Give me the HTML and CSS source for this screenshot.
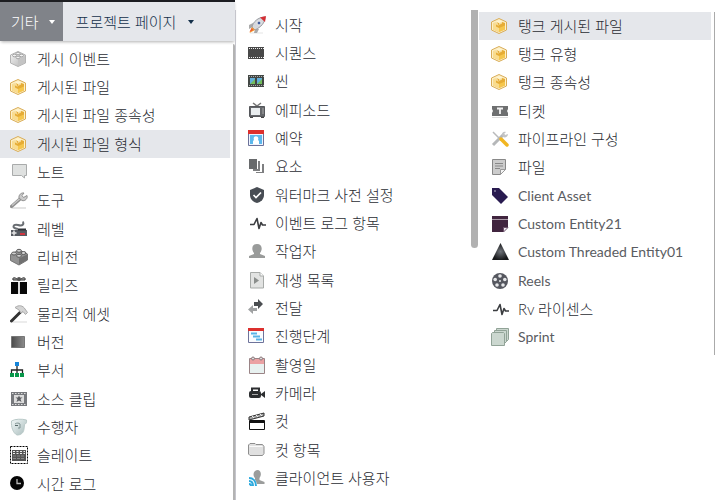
FILE: index.html
```html
<!DOCTYPE html>
<html lang="ko">
<head>
<meta charset="utf-8">
<meta name="viewport" content="width=device-width, initial-scale=1">
<title>기타</title>
<link rel="stylesheet" href="styles.css">
</head>
<body>
<svg class="defs" aria-hidden="true">
  <defs>
    <linearGradient id="gold" x1="0" y1="0" x2="0" y2="1"><stop offset="0" stop-color="#fbeab8"/><stop offset="1" stop-color="#eebf58"/></linearGradient>
    <linearGradient id="silver" x1="0" y1="0" x2="1" y2="1"><stop offset="0" stop-color="#f7f7f7"/><stop offset="1" stop-color="#b2b2b2"/></linearGradient>
    <linearGradient id="dark" x1="0" y1="0" x2="1" y2="0"><stop offset="0" stop-color="#4a4a4a"/><stop offset="1" stop-color="#8c8c8c"/></linearGradient>
    <linearGradient id="mask" x1="0" y1="0" x2="1" y2="1"><stop offset="0" stop-color="#f2f8f8"/><stop offset="1" stop-color="#a9bcbc"/></linearGradient>
    <radialGradient id="cone"><stop offset="0" stop-color="#70747a"/><stop offset="1" stop-color="#17181a"/></radialGradient>
  </defs>
  <symbol id="cube" viewBox="0 0 18 18">
    <path d="M8 1.500 15.500 5v8L8 16.500.5 13V5z" fill="#fdf0c8" stroke="#d9ac56"/>
    <path d="M2 6 8 3l6 3v6.500L8 15l-6-2.500z" fill="url(#gold)"/>
    <path d="M8 9l6-3v6.500L8 15z" fill="#f5c64c"/>
    <path d="M2 6l6 3v6l-6-2.500z" fill="#f9dc8e"/>
    <path d="M6 5 8 6v2l3-1.500V5l3 1v2.500L8 11 5 9.500V7.500L8 9z" fill="#e6ac35"/>
    <path d="M5 4.500 8 3l3.500 1.500L8 6z" fill="#fff4cf"/>
  </symbol>
  <symbol id="pulse" viewBox="0 0 18 18">
    <path d="M2 10.500h4L9 4.500l2 10 2-6 1.500 2.500H18" fill="none" stroke="#3b3d40" stroke-width="1.600" stroke-linejoin="round"/>
  </symbol>
</svg>

<main class="board">
  <section class="panel panel-first">
    <nav class="tabs">
      <button type="button" class="tab tab-active">기타 <span class="caret"></span></button>
      <button type="button" class="tab">프로젝트 페이지 <span class="caret"></span></button>
    </nav>
    <ul class="menu">
      <li><a href="#"><svg class="icon" viewBox="0 0 18 18"><path d="M8 1.500 15.500 5v8L8 16.500.5 13V5z" fill="url(#silver)" stroke="#b4b4b4"/><path d="M8 9.500 15 6v7l-7 3z" fill="#c4c4c4"/><g fill="#f2f2f2" stroke="#a4a4a4"><ellipse cx="8" cy="3.500" rx="2" ry="1.300"/><ellipse cx="4.500" cy="5.500" rx="2" ry="1.300"/><ellipse cx="11.500" cy="5.500" rx="2" ry="1.300"/><ellipse cx="8" cy="7.500" rx="2" ry="1.300"/></g></svg>게시 이벤트</a></li>
      <li><a href="#"><svg class="icon"><use href="#cube"/></svg>게시된 파일</a></li>
      <li><a href="#"><svg class="icon"><use href="#cube"/></svg>게시된 파일 종속성</a></li>
      <li><a href="#" class="current"><svg class="icon"><use href="#cube"/></svg>게시된 파일 형식</a></li>
      <li><a href="#"><svg class="icon" viewBox="0 0 18 18"><path d="M2.500 1.500h14v11h-2V15l-3-2.500h-9z" fill="#dfe1e0" stroke="#a9abab"/></svg>노트</a></li>
      <li><a href="#"><svg class="icon" viewBox="0 0 18 18"><path d="M2 17h14" stroke="#e4e4e4" stroke-width="2"/><path d="M1.500 15.500 10 8" stroke="#8f8f8f" stroke-width="3.200" stroke-linecap="round"/><path d="M2 14.500 10 7.500" stroke="#c8c8c8" stroke-width="1.200"/><path d="M9 7c-.5-3 2-5.500 5-5l-2 2.500 1.500 2 3.500-2c1 3-2 6-5 5z" fill="#cbcbcb" stroke="#919191"/></svg>도구</a></li>
      <li><a href="#"><svg class="icon" viewBox="0 0 18 18"><path d="M8 9c-7-1-5-5 0-4 5 1.500 6-1 5-3.500" fill="none" stroke="#6a6e73" stroke-width="2"/><path d="M1 10h16v6H1z" fill="#565a61"/><path d="M4 10.500v5M1.500 13h5" stroke="#e5e5e5" stroke-width="1.500"/><path d="M10 14h5" stroke="#d03540" stroke-width="2"/><path d="M8 9.500h8" stroke="#303338" stroke-width="2"/></svg>레벨</a></li>
      <li><a href="#"><svg class="icon" viewBox="0 0 18 18"><path d="M.5 6.500 9 2l8.500 4v6L9 17 .5 12.500z" fill="#929292" stroke="#747474"/><path d="M9 10.500 17 6.500v5.500l-8 4.500z" fill="#707070"/><g fill="#d0d0d0" stroke="#5c5c5c"><ellipse cx="9" cy="2.800" rx="2.400" ry="1.500"/><ellipse cx="4" cy="5.500" rx="2.400" ry="1.500"/><ellipse cx="13.500" cy="5" rx="2.400" ry="1.500"/><ellipse cx="9" cy="7.800" rx="2.400" ry="1.500"/></g></svg>리비전</a></li>
      <li><a href="#"><svg class="icon" viewBox="0 0 18 18"><path d="M1 6h7v12H1zm9 0h7v12h-7z" fill="#080808"/><path d="M8 6h2v12H8z" fill="#ddd"/><path d="M8.500 4C5 1 2 1 3 4zm1 0c3.500-3 6.500-3 5.500 0z" fill="#aaa" stroke="#333"/><circle cx="9" cy="3" r="2" fill="#555"/></svg>릴리즈</a></li>
      <li><a href="#"><svg class="icon" viewBox="0 0 18 18"><path d="M3 17h14" stroke="#ececec" stroke-width="2"/><path d="M1.500 16 11 6.500" stroke="#333" stroke-width="3" stroke-linecap="round"/><path d="M5 2.500C9-.5 13 .5 15 4l2.500 3.500-2 2L13 6.500l-2 1.500-2-3z" fill="#d4d4d4" stroke="#aaa"/></svg>물리적 에셋</a></li>
      <li><a href="#"><svg class="icon" viewBox="0 0 18 18"><path d="M1.500 3.500h13v11h-13z" fill="url(#dark)" stroke="#777"/></svg>버전</a></li>
      <li><a href="#"><svg class="icon" viewBox="0 0 18 18"><path d="M7 5v8M1.500 13V9h11v4" fill="none" stroke="#222" stroke-width="1.300"/><path d="M5 1h4v4H5z" fill="#1684d8"/><path d="M0 12h4v4H0zm5 0h4v4H5zm5 0h4v4h-4z" fill="#07974a"/></svg>부서</a></li>
      <li><a href="#"><svg class="icon" viewBox="0 0 18 18"><path d="M1 2h16v14H1z" fill="#77797d"/><path d="M2 3.500h14M2 14.500h14" stroke="#ddd" stroke-dasharray="1.500 1.500"/><path d="M4 5h10v8H4z" fill="#dcdcdc"/><path d="m9 5.500 1 2h2.500L10.500 9l1 3L9 10.500 6.500 12l1-3-2-1.500H8z" fill="#5a5c60"/></svg>소스 클립</a></li>
      <li><a href="#"><svg class="icon" viewBox="0 0 18 18"><path d="M1.500 3C5 .8 12 .8 16.500 2c.5 3-1 4-2 4.500L14 11c-.5 4-3 6-7 6C3 15 1 9 1.500 3z" fill="url(#mask)" stroke="#b9c9c8"/><path d="M5 6c2-1.500 4-1 5 0v4H8" fill="none" stroke="#809393"/><path d="M5 7.500h3" stroke="#566868"/></svg>수행자</a></li>
      <li><a href="#"><svg class="icon" viewBox="0 0 18 18"><path d="M.5.5h17v17H.5z" fill="#fff" stroke="#000" stroke-dasharray="2 1"/><path d="M2 4h14v11H2z" fill="#555"/><path d="M3 5.500h12M3 7.500h12" stroke="#eee" stroke-dasharray="2 1.500"/><path d="M3 10h12M3 12.500h12" stroke="#888" stroke-dasharray="3 1"/></svg>슬레이트</a></li>
      <li><a href="#"><svg class="icon" viewBox="0 0 18 18"><circle cx="7" cy="8" r="7" fill="#050505"/><path d="M7 4v4.500h4" fill="none" stroke="#bbb" stroke-width="1.300"/></svg>시간 로그</a></li>
    </ul>
  </section>

  <section class="panel panel-second">
    <ul class="menu">
      <li><a href="#"><svg class="icon" viewBox="0 0 18 18"><path d="M2 17h13" stroke="#e5e5e5"/><path d="M5 7 1 9v4l4-2zm6 6-2 4H6l1-4z" fill="#aaa"/><path d="M4 11C5 6 10 1 17 1c0 6-4 10-10 13z" fill="#d6d8dc" stroke="#9a9ca2"/><path d="M12 1.500 18 0l-1 6z" fill="#d52e34"/><circle cx="11" cy="7" r="2" fill="#405a99" stroke="#eee"/><path d="m4 11 3 3-5.500 3z" fill="#f5a233"/><path d="m3.500 12 2 2-4 2z" fill="#ee5b33"/></svg>시작</a></li>
      <li><a href="#"><svg class="icon" viewBox="0 0 18 18"><path d="M0 3h16v12H0z" fill="#484848"/><path d="M1 4.500h15M1 13.500h15" stroke="#eee" stroke-dasharray="1 1"/></svg>시퀀스</a></li>
      <li><a href="#"><svg class="icon" viewBox="0 0 18 18"><path d="M0 3h16v12H0z" fill="#424744"/><path d="M1 4.500h15M1 13.500h15" stroke="#aaa" stroke-dasharray="1 1"/><path d="M2 6h5v6H2zm7 0h5v6H9z" fill="#62aedb"/><path d="m2 12 5-5v5zm7 0 5-5v5z" fill="#73bd5c"/></svg>씬</a></li>
      <li><a href="#"><svg class="icon" viewBox="0 0 18 18"><path d="m5 2 4 3 4-3" fill="none" stroke="#777" stroke-width="1.500"/><path d="M1.500 5.500h15v10h-15z" fill="#65676b" stroke="#55575b"/><path d="M3 7h9v7H3z" fill="#e9edef"/><path d="M14 8h2m-2 2h2m-2 2h2" stroke="#aaa"/><path d="M2 16.500h3m8 0h3" stroke="#444"/></svg>에피소드</a></li>
      <li><a href="#"><svg class="icon" viewBox="0 0 18 18"><path d="M.5 2.500h15v14H.5z" fill="#eef4ff" stroke="#6b7199"/><path d="M0 1h16v4H0z" fill="#dd302d"/><path d="M2 6h12v9H2z" fill="#5cb8ed"/><path d="M5 15v-3l1-1c-2-5 6-5 4 0l1 1v3z" fill="#fff"/></svg>예약</a></li>
      <li><a href="#"><svg class="icon" viewBox="0 0 18 18"><path d="M1 2h8v10H1z" fill="#686a6c"/><path d="M10 4h2v10H5v-2h5zM14 7h2v9H8v-1h6z" fill="#7e7f81"/></svg>요소</a></li>
      <li><a href="#"><svg class="icon" viewBox="0 0 18 18"><path d="m9 1 7 3v5c0 4-3 7-7 8-4-1-7-4-7-8V4z" fill="#484d54"/><path d="m5.500 9 2.500 2.500L13 6.500" fill="none" stroke="#fff" stroke-width="1.700"/></svg>워터마크 사전 설정</a></li>
      <li><a href="#"><svg class="icon"><use href="#pulse"/></svg>이벤트 로그 항목</a></li>
      <li><a href="#"><svg class="icon" viewBox="0 0 18 18"><path d="M6 11C3 7 4 2 9 2s6 5 3 9v1l5 2v2H1v-2l5-2z" fill="#999b9a"/></svg>작업자</a></li>
      <li><a href="#"><svg class="icon" viewBox="0 0 18 18"><path d="M2.500 1.500H12L15.500 5v12h-13z" fill="#e2e3e2" stroke="#a7aaa8"/><path d="M12 1.500V5h3.500" fill="#fff" stroke="#a7aaa8"/><path d="m6 6 5 3.500L6 13z" fill="#8b8e8c"/></svg>재생 목록</a></li>
      <li><a href="#"><svg class="icon" viewBox="0 0 18 18"><path d="M9 9H5V6L0 10.500 5 15v-3h4z" fill="#a0a2a3"/><path d="M6 3h4V0l5 5-5 5V7H6z" fill="#4b4e51"/></svg>전달</a></li>
      <li><a href="#"><svg class="icon" viewBox="0 0 18 18"><path d="M.5 2.500h15v13H.5z" fill="#fafcff" stroke="#6e739a"/><path d="M0 1h16v3H0z" fill="#dc302e"/><path d="M3 6.500h6M5 9.500h7M8 12.500h6" stroke="#59b3e7" stroke-width="2"/></svg>진행단계</a></li>
      <li><a href="#"><svg class="icon" viewBox="0 0 18 18"><path d="M1.500 2.500h15v15h-15z" fill="#e8f1f0" stroke="#9a8486"/><path d="M2 3h14v5H2z" fill="#eba1a3"/><g fill="#ddd" stroke="#8c777a"><circle cx="5" cy="2.500" r="1.500"/><circle cx="13" cy="2.500" r="1.500"/></g></svg>촬영일</a></li>
      <li><a href="#"><svg class="icon" viewBox="0 0 18 18"><rect x="1" y="7" width="12" height="7" rx="2" fill="#2c2e30"/><path d="M4 7V4.500h7V7" fill="none" stroke="#2c2e30" stroke-width="2"/><path d="m13 10 4-3v7l-4-3z" fill="#2c2e30"/><path d="M4 10.500h6" stroke="#aaa"/></svg>카메라</a></li>
      <li><a href="#"><svg class="icon" viewBox="0 0 18 18"><path d="m1 5 15-4v3L1 8z" fill="#aaa" stroke="#333"/><path d="m4 4 2 2m2-3 2 2m2-3 2 2" stroke="#eee"/><path d="M1.500 8.500h15v9h-15z" fill="#fff" stroke="#111"/><path d="M1 10h16" stroke="#111" stroke-width="2"/></svg>컷</a></li>
      <li><a href="#"><svg class="icon" viewBox="0 0 18 18"><path d="M.5 4 2 2.500h5l1 1h6.500l1.500 2v7l-1.500 2H2L.5 13z" fill="#e0e0e0" stroke="#8e8e8e"/><path d="M1.500 5.500h13" stroke="#fafafa"/></svg>컷 항목</a></li>
      <li><a href="#"><svg class="icon" viewBox="0 0 18 18"><path d="M7 9C4 6 6 1 9.500 1S14 6 11.500 9v2l5 2v2H7z" fill="#9b9d9c"/><path d="M1 8c5 0 8 4 8 9H1z" fill="#fff"/><path d="M1 9c4 0 7 3 7 8M1 12c3 0 4 2 4 5M1 15c1 0 2 1 2 2" fill="none" stroke="#2eaade" stroke-width="2"/></svg>클라이언트 사용자</a></li>
    </ul>
    <div class="thumb"></div>
  </section>

  <section class="panel panel-third">
    <ul class="menu">
      <li><a href="#" class="current"><svg class="icon"><use href="#cube"/></svg>탱크 게시된 파일</a></li>
      <li><a href="#"><svg class="icon"><use href="#cube"/></svg>탱크 유형</a></li>
      <li><a href="#"><svg class="icon"><use href="#cube"/></svg>탱크 종속성</a></li>
      <li><a href="#"><svg class="icon" viewBox="0 0 18 18"><path d="M1 4h16v3l-1 2 1 2v3H1v-3l1-2-1-2z" fill="#6e6f70"/><path d="M6 6.500h6M9 6.500V12" stroke="#f2f2f2" stroke-width="1.800"/><path d="M1 15.500h16" stroke="#ddd"/></svg>티켓</a></li>
      <li><a href="#"><svg class="icon" viewBox="0 0 18 18"><path d="m2 15 11-11" stroke="#b5b7b9" stroke-width="3"/><path d="M11 5c0-3 2-4 4-3l-2 2 1 1 3-1c0 3-3 4-5 3z" fill="#c3c4c5"/><path d="m2 2 7 7" stroke="#b9babb" stroke-width="1.500"/><path d="m10 9 6 6" stroke="#f1b622" stroke-width="3.500" stroke-linecap="round"/></svg>파이프라인 구성</a></li>
      <li><a href="#"><svg class="icon" viewBox="0 0 18 18"><path d="M1.500 1.500h13v10l-5 5h-8z" fill="#ccc" stroke="#888"/><path d="M4 5.500h8M4 8h8M4 10.500h5" stroke="#888"/><path d="M9.500 16.500v-5h5z" fill="#f4f4f4" stroke="#999"/></svg>파일</a></li>
      <li><a href="#" class="latin"><svg class="icon" viewBox="0 0 18 18"><path d="M1 1h7l9 9-7 7-9-9z" fill="#291b50"/><circle cx="4" cy="4" r="1" fill="#8680a1"/></svg>Client Asset</a></li>
      <li><a href="#" class="latin"><svg class="icon" viewBox="0 0 18 18"><path d="M1 1h16v12h-4v4H1z" fill="#41253f"/><path d="M1 4.500h16" stroke="#a99aa7"/><path d="M12.500 17v-4.500H17z" fill="#f1e9f1" stroke="#6c526a"/></svg>Custom Entity21</a></li>
      <li><a href="#" class="latin"><svg class="icon" viewBox="0 0 18 18"><path d="M9.500 0 18 17H1z" fill="url(#cone)"/></svg>Custom Threaded Entity01</a></li>
      <li><a href="#" class="latin"><svg class="icon" viewBox="0 0 18 18"><circle cx="9" cy="9" r="8" fill="#55575f"/><g fill="#e6e7e9"><circle cx="9" cy="4" r="1.800"/><circle cx="13.800" cy="7.500" r="1.800"/><circle cx="12" cy="13" r="1.800"/><circle cx="6" cy="13" r="1.800"/><circle cx="4.200" cy="7.500" r="1.800"/><circle cx="9" cy="9" r="1"/></g></svg>Reels</a></li>
      <li><a href="#"><svg class="icon"><use href="#pulse"/></svg>Rv 라이센스</a></li>
      <li><a href="#" class="latin"><svg class="icon" viewBox="0 0 18 18"><g fill="#cbd7cf" stroke="#91a397"><path d="m5.500.5h12v11l-2 2h-10z"/><path d="m3.500 2.500h12v11l-2 2h-10z"/><path d="m.5 5.500 1-1h11l1 1v12H.5z"/></g></svg>Sprint</a></li>
    </ul>
  </section>
</main>
</body>
</html>
```
FILE: styles.css
```css
* {
  box-sizing: border-box;
}

body {
  margin: 0;
  background: #fff;
  color: #2b2d33;
  font-family: Lato, "Noto Sans CJK KR", sans-serif;
  font-size: 15px;
  font-weight: 300;
  line-height: 20px;
}

.defs {
  position: absolute;
  width: 0;
  height: 0;
}

.board {
  display: grid;
  grid-template-columns: 235fr 243fr 237fr;
  align-items: start;
  min-height: 100vh;
}

.panel {
  min-width: 0;
}

.panel-first {
  display: flex;
  flex-direction: column;
  align-self: stretch;
}

.panel-first .menu {
  flex: 1;
  margin-top: 3px;
  padding: 1px 3px 0 0;
  border-right: 2px solid #b3b3b3;
  border-top-right-radius: 2px;
}

.panel-second {
  display: flex;
  align-items: flex-start;
  align-self: stretch;
  margin-top: 10px;
  border-left: 1px solid #c5c5cc;
}

.panel-second .menu {
  flex: 1;
  padding-top: 1px;
}

.panel-third {
  margin-top: 12px;
  padding: 0 3px 3px 1px;
  border-right: 1px solid #aaa;
}

.tabs {
  display: flex;
  border-top: 2px solid #1c1d21;
  background: #e5e7eb;
  box-shadow: 0 2px 3px -1px #b0b0b0;
}

.tab {
  display: flex;
  align-items: center;
  gap: 12px;
  height: 39px;
  padding: 0 13px;
  border: 0;
  background: transparent;
  color: #14304a;
  font: inherit;
  white-space: nowrap;
}

.tab-active {
  gap: 10px;
  padding: 0 8px 0 11px;
  background: #808389;
  color: #fff;
}

.caret {
  border: 3px solid transparent;
  border-top: 4px solid currentColor;
  border-bottom: 0;
}

.menu {
  margin: 0;
  padding: 0;
  list-style: none;
}

.menu li:nth-child(3n) {
  padding-bottom: 1px;
}

.menu a {
  display: flex;
  align-items: center;
  gap: 9px;
  height: 28px;
  padding-left: 12px;
  color: inherit;
  text-decoration: none;
  white-space: nowrap;
}

.panel-first .menu a {
  padding-left: 10px;
}

.menu .current {
  background: #e5e7eb;
}

.menu .latin {
  color: #5a5c62;
  font-size: 14px;
  font-weight: 400;
}

.icon {
  flex: none;
  width: 18px;
  height: 18px;
}

.thumb {
  width: 7px;
  height: 238px;
  border-radius: 0 0 4px 4px;
  background: #b1b1b1;
}
```
